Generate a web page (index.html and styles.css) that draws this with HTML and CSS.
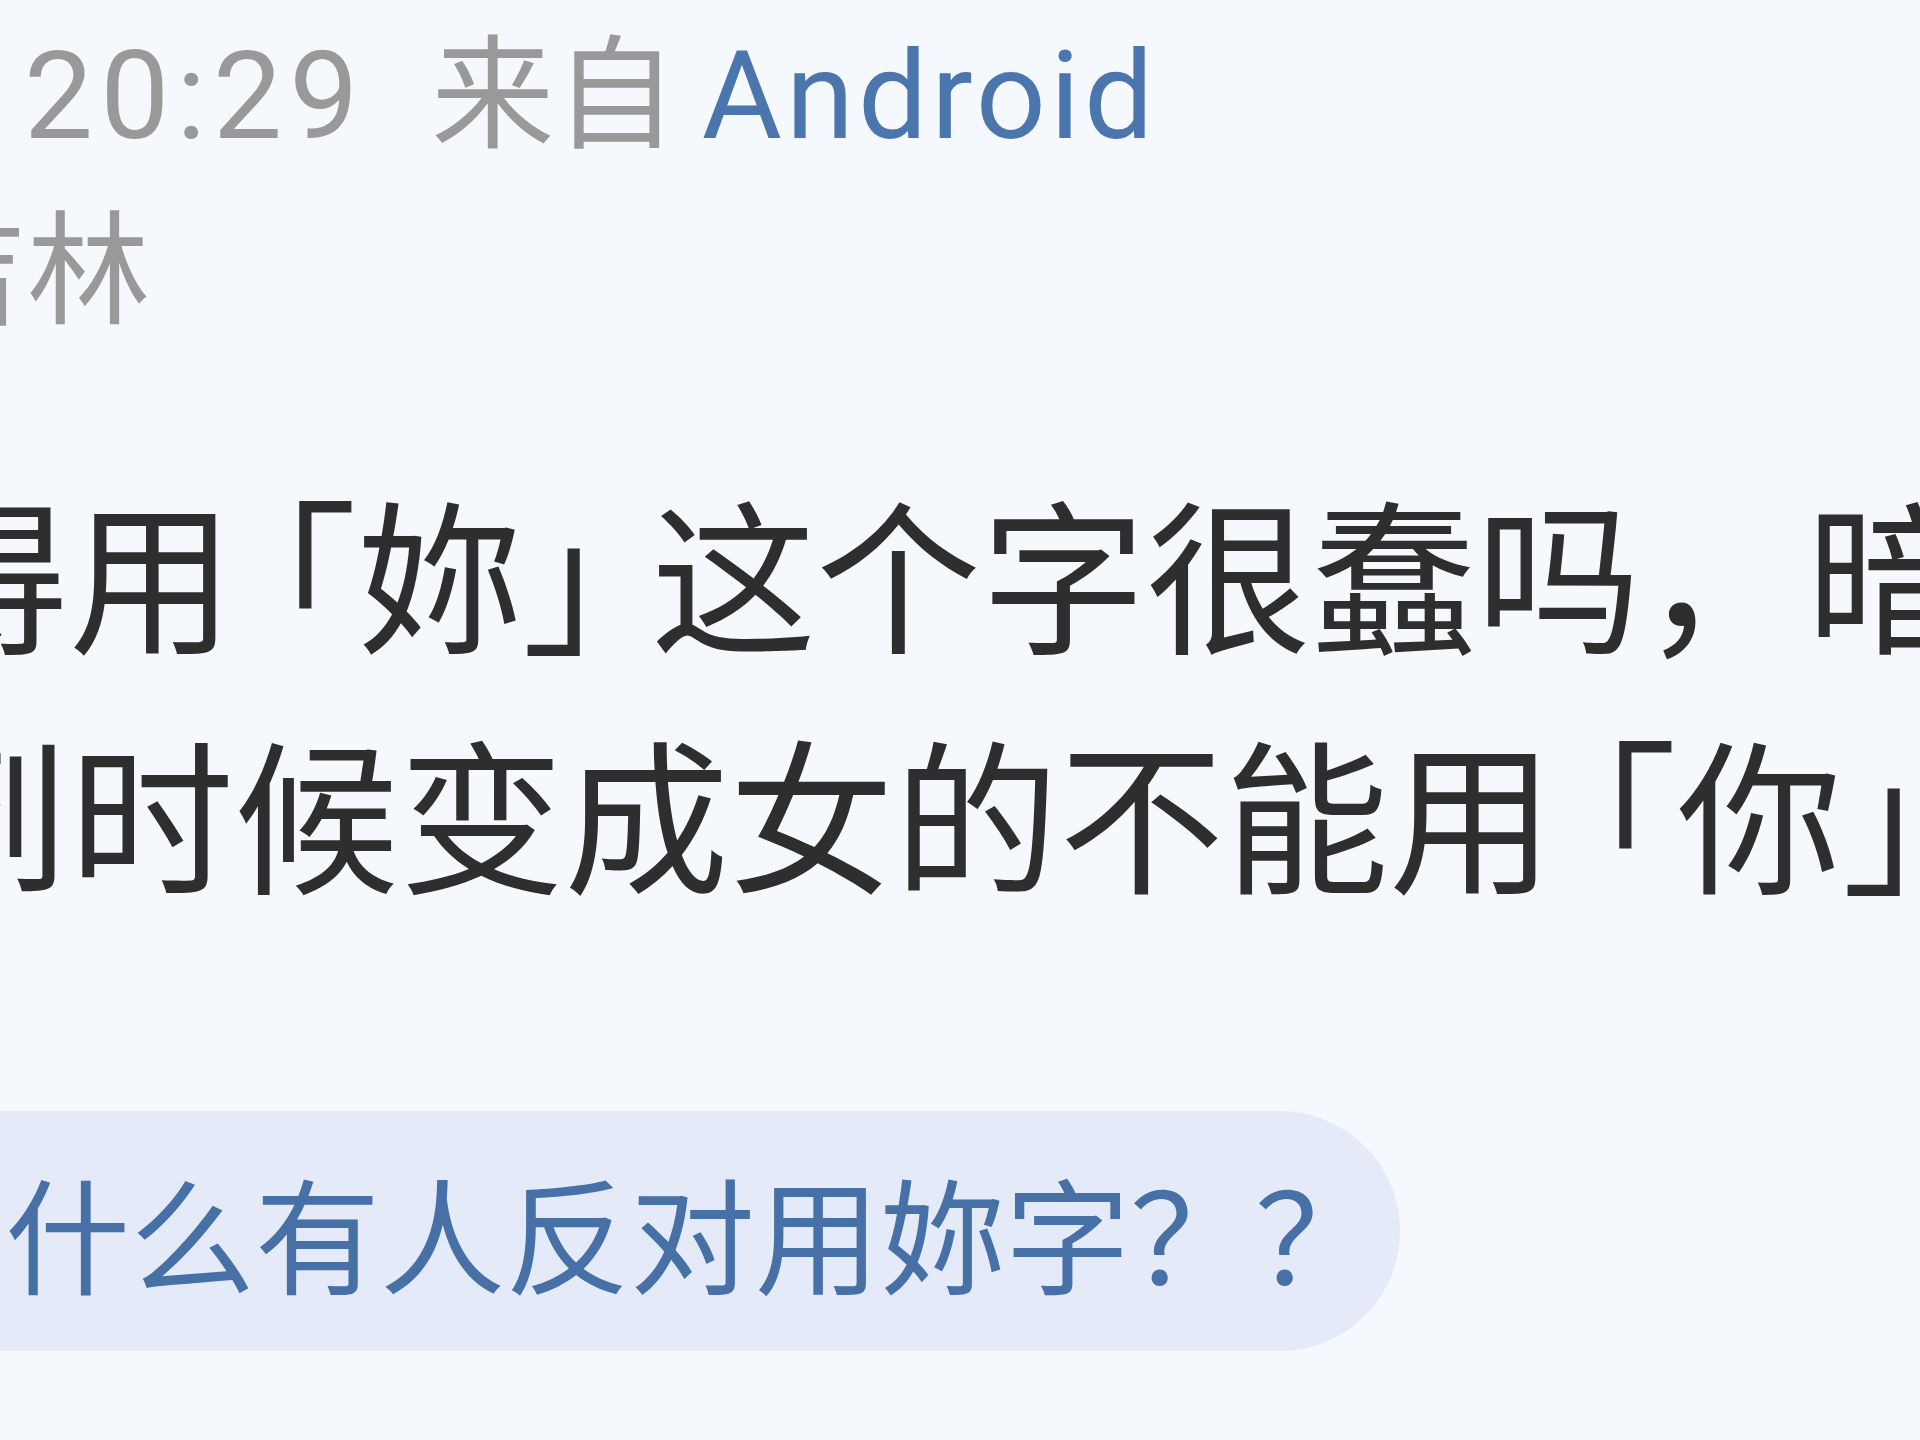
FILE: index.html
```html
<!DOCTYPE html>
<html lang="zh-CN">
<head>
  <meta charset="UTF-8" />
  <meta name="viewport" content="width=device-width, initial-scale=1.0"/>
  <title>帖子</title>
  <link rel="stylesheet" href="styles.css">
</head>
<body>
<div class="post">
  <div class="meta">
    <div class="meta-time"><span class="time">20:29</span><span class="from">来自</span> <a href="#" class="device">Android</a></div>
    <div class="meta-ip">吉林</div>
  </div>

  <p class="content">
    <span class="line">得用<span class="bracket-l">「</span>妳<span class="bracket-r">」</span>这个字很蠢吗，暗</span>
    <span class="line">到时候变成女的不能用<span class="bracket-l">「</span>你<span class="bracket-r">」</span></span>
  </p>

  <a href="#" class="topic">为什么有人反对用妳字？？</a>
</div>
</body>
</html>
```

FILE: styles.css
```css
* {
  margin: 0;
  padding: 0;
  box-sizing: border-box;
}

html, body {
  width: 100%;
  height: 100%;
}

body {
  background: #f5f8fc;
  overflow: hidden;
  font-family: Roboto, "Noto Sans CJK SC", sans-serif;
  color: #333;
}

/* screenshot is cropped, the post starts left of the frame */
.post {
  margin-left: -96px;
  display: flex;
  flex-direction: column;
  align-items: flex-start;
}

.meta {
  padding-top: 8px;
  font-size: 123px;
  line-height: 176px;
  color: #999;
  white-space: nowrap;
}

.meta-time {
  padding-left: 120px;
}

.meta-time .time {
  letter-spacing: 7px;
}

.meta-time .from {
  margin-left: 66px;
}

.device {
  margin-left: -6px;
  letter-spacing: 4px;
  color: #4a76ad;
  text-decoration: none;
}

.content {
  margin-top: 90px;
  font-family: "Noto Sans CJK SC", sans-serif;
  font-size: 165px;
  line-height: 240px;
  color: #2e2e2e;
  white-space: nowrap;
}

.content .line {
  display: block;
}

/* corner brackets are set narrower than a full em */
.bracket-l {
  margin-left: -42px;
}

.bracket-r {
  margin-right: -36px;
}

.topic {
  margin-top: 181px;
  margin-left: -40px;
  padding: 0 20px 0 16px;
  height: 240px;
  display: flex;
  align-items: center;
  background: #e4eaf7;
  border-radius: 0 120px 120px 0;
  font-family: "Noto Sans CJK SC", sans-serif;
  font-size: 125px;
  line-height: 240px;
  color: #4670a6;
  text-decoration: none;
  white-space: nowrap;
}
```
